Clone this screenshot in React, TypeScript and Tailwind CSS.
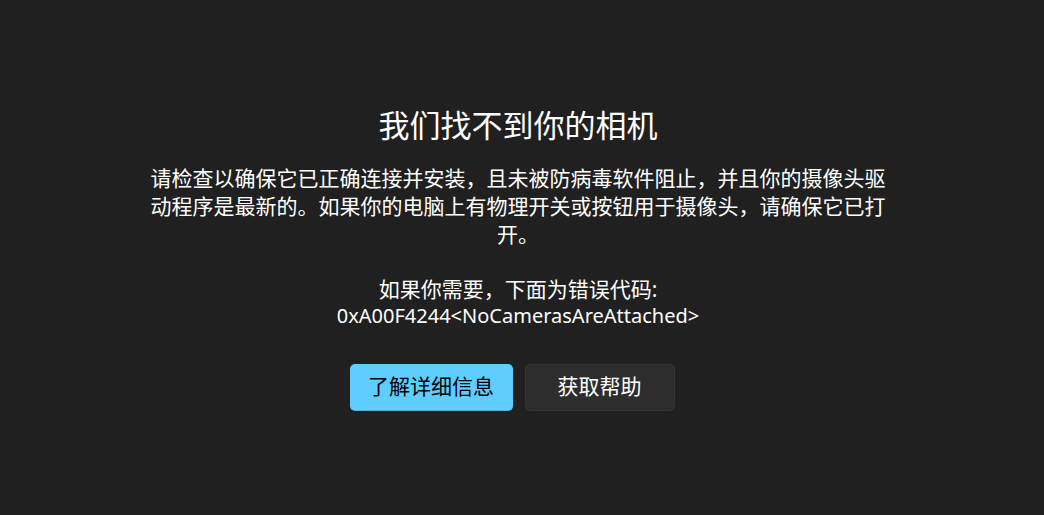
export default function App() {
  const font = { fontFamily: '"Noto Sans", "Noto Sans CJK SC", sans-serif' };
  return (
    <div
      className="flex h-[515px] w-full flex-col items-center justify-center bg-[#202020] pr-[8px] text-white"
      style={font}
    >
      <h1 className="text-[31px] leading-[40px] font-normal">我们找不到你的相机</h1>
      <p className="mt-[19px] w-[750px] text-center text-[21px] leading-[28px]">
        请检查以确保它已正确连接并安装，且未被防病毒软件阻止，并且你的摄像头驱动程序是最新的。如果你的电脑上有物理开关或按钮用于摄像头，请确保它已打开。
      </p>
      <p className="mt-[28px] text-center text-[21px] leading-[26px]">
        如果你需要，下面为错误代码:
        <br />
        <span className="text-[20px]">0xA00F4244&lt;NoCamerasAreAttached&gt;</span>
      </p>
      <div className="mt-[35px] mr-[12px] flex gap-3">
        <button className="h-[47px] w-[163px] rounded-[5px] border-b border-[#4fb0dc] bg-[#60cdff] text-[21px] text-black">
          了解详细信息
        </button>
        <button className="h-[47px] w-[150px] rounded-[5px] border border-[#353535] bg-[#2d2d2d] text-[21px] text-white">
          获取帮助
        </button>
      </div>
    </div>
  );
}
